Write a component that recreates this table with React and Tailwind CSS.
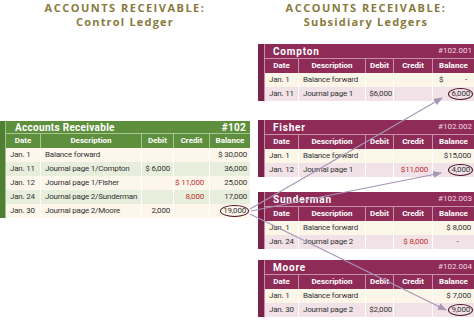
const font = { fontFamily: 'Roboto, "Liberation Sans", sans-serif' }

const leftRows = [
  { date: 'Jan. 1', desc: 'Balance forward', debit: '', credit: '', bal: '$ 30,000' },
  { date: 'Jan. 11', desc: 'Journal page 1/Compton', debit: '$ 6,000', credit: '', bal: '36,000' },
  { date: 'Jan. 12', desc: 'Journal page 1/Fisher', debit: '', credit: '$ 11,000', bal: '25,000' },
  { date: 'Jan. 24', desc: 'Journal page 2/Sunderman', debit: '', credit: '8,000', bal: '17,000' },
  { date: 'Jan. 30', desc: 'Journal page 2/Moore', debit: '2,000', credit: '', bal: '19,000', circle: true },
]

const ledgers = [
  {
    name: 'Compton', num: '#102.001', mt: 'mt-[15px]',
    rows: [
      { date: 'Jan. 1', desc: 'Balance forward', debit: '', credit: '', bal: 'dash' },
      { date: 'Jan. 11', desc: 'Journal page 1', debit: '$6,000', credit: '', bal: '6,000', circle: true },
    ],
  },
  {
    name: 'Fisher', num: '#102.002', mt: 'mt-[19px]',
    rows: [
      { date: 'Jan. 1', desc: 'Balance forward', debit: '', credit: '', bal: '$15,000' },
      { date: 'Jan. 12', desc: 'Journal page 1', debit: '', credit: '$11,000', bal: '4,000', circle: true },
    ],
  },
  {
    name: 'Sunderman', num: '#102.003', mt: 'mt-[15px]',
    rows: [
      { date: 'Jan. 1', desc: 'Balance forward', debit: '', credit: '', bal: '$ 8,000' },
      { date: 'Jan. 24', desc: 'Journal page 2', debit: '', credit: '$ 8,000', bal: '-', center: true },
    ],
  },
  {
    name: 'Moore', num: '#102.004', mt: 'mt-[11px]',
    rows: [
      { date: 'Jan. 1', desc: 'Balance forward', debit: '', credit: '', bal: '$ 7,000' },
      { date: 'Jan. 30', desc: 'Journal page 2', debit: '$2,000', credit: '', bal: '9,000', circle: true },
    ],
  },
]

function Circled({ children }) {
  return (
    <span className="inline-block border-[1.5px] border-[#4a1026] rounded-[50%] px-[2px] leading-[10px] -mr-[2px]">
      {children}
    </span>
  )
}

function Heading({ sub }) {
  return (
    <div className="text-center text-[#887a3c] font-bold leading-[14px] pt-[1px] whitespace-nowrap" style={{ fontFamily: '"Open Sans", "Liberation Sans", sans-serif' }}>
      <div className="text-[11px] tracking-[1.5px]">ACCOUNTS RECEIVABLE:</div>
      <div className="text-[11px] tracking-[1.2px]">{sub}</div>
    </div>
  )
}

const heads = ['Date', 'Description', 'Debit', 'Credit', 'Balance']
const cell = 'flex items-center whitespace-nowrap overflow-hidden'

function ControlLedger() {
  const cols = 'grid grid-cols-[34px_101px_32px_36px_41px]'
  return (
    <div className="flex mt-[92px]" style={font}>
      <div className="w-[6px] bg-[#4f7f33] border-r border-[#9fc08a]" />
      <div className="flex-1">
        <div className="h-[13px] bg-[#5d8f3d] flex items-center justify-between pl-[9px] pr-[4px] text-white font-bold text-[10px] tracking-[0.3px] border-b border-[#a8c795]">
          <span>Accounts Receivable</span>
          <span>#102</span>
        </div>
        <div className={`${cols} h-[14px] bg-[#5d8f3d] text-white font-bold text-[8px]`}>
          {heads.map((h, i) => (
            <div key={h} className={`${cell} justify-center ${i ? 'border-l border-[#a8c795]' : ''}`}>{h}</div>
          ))}
        </div>
        {leftRows.map((r, i) => (
          <div key={r.date} className={`${cols} h-[14px] text-[8px] tracking-[-0.2px] text-[#333333] ${i % 2 ? 'bg-[#e8eedc]' : 'bg-[#fcf7ea]'}`}>
            <div className={`${cell} pl-[4px]`}>{r.date}</div>
            <div className={`${cell} pl-[4px] border-l border-white`}>{r.desc}</div>
            <div className={`${cell} justify-end pr-[3px] border-l border-white`}>{r.debit}</div>
            <div className={`${cell} justify-end pr-[5px] border-l border-white text-[#c4302e]`}>{r.credit}</div>
            <div className={`${cell} justify-end pr-[3px] border-l border-white`}>
              {r.circle ? <Circled>{r.bal}</Circled> : r.bal}
            </div>
          </div>
        ))}
      </div>
    </div>
  )
}

function SubLedger({ name, num, rows, mt }) {
  const cols = 'grid grid-cols-[33px_67px_28px_39px_42px]'
  return (
    <div className={`flex ${mt}`} style={font}>
      <div className="w-[7px] bg-[#7c2149] border-r border-[#c88fa8]" />
      <div className="flex-1">
        <div className="h-[15px] bg-[#8f2b57] flex items-center justify-between pl-[8px] pr-[2px] border-b border-[#c88fa8]">
          <span className="text-white font-bold text-[10px] tracking-[0.8px]">{name}</span>
          <span className="text-[#f3d6e2] text-[8px]">{num}</span>
        </div>
        <div className={`${cols} h-[14px] bg-[#8f2b57] text-white font-bold text-[8px]`}>
          {heads.map((h, i) => (
            <div key={h} className={`${cell} justify-center ${i ? 'border-l border-[#c88fa8]' : ''}`}>{h}</div>
          ))}
        </div>
        {rows.map((r, i) => (
          <div key={r.date} className={`${cols} h-[14px] text-[8px] tracking-[-0.2px] text-[#333333] ${i % 2 ? 'bg-[#f0e2e6]' : 'bg-[#fcf6e8]'}`}>
            <div className={`${cell} pl-[4px]`}>{r.date}</div>
            <div className={`${cell} pl-[4px] border-l border-white`}>{r.desc}</div>
            <div className={`${cell} justify-end pr-[1px] border-l border-white`}>{r.debit}</div>
            <div className={`${cell} justify-end pr-[4px] border-l border-white text-[#c4302e]`}>{r.credit}</div>
            {r.bal === 'dash' ? (
              <div className={`${cell} justify-between pl-[6px] pr-[7px] border-l border-white`}>
                <span>$</span>
                <span>-</span>
              </div>
            ) : (
              <div className={`${cell} ${r.center ? 'justify-center pl-[8px]' : 'justify-end pr-[3px]'} border-l border-white`}>
                {r.circle ? <Circled>{r.bal}</Circled> : r.bal}
              </div>
            )}
          </div>
        ))}
      </div>
    </div>
  )
}

function Arrows() {
  const c = '#a696b6'
  const lines = [
    [250, 209, 442, 98],
    [251, 211, 441, 173],
    [250, 214, 446, 310],
  ]
  return (
    <svg className="absolute left-0 top-0 pointer-events-none" width="474" height="323" viewBox="0 0 474 323">
      <defs>
        <marker id="ah" markerWidth="9" markerHeight="7" refX="8" refY="3.5" orient="auto" markerUnits="userSpaceOnUse">
          <path d="M0 0 L9 3.5 L0 7 Z" fill={c} />
        </marker>
      </defs>
      {lines.map(([x1, y1, x2, y2], i) => (
        <line key={i} x1={x1} y1={y1} x2={x2} y2={y2} stroke={c} strokeWidth="1.2" markerEnd="url(#ah)" />
      ))}
    </svg>
  )
}

export default function App() {
  return (
    <div className="relative w-[474px] h-[323px] bg-white overflow-hidden flex">
      <div className="w-[250px]">
        <Heading sub="Control Ledger" />
        <ControlLedger />
      </div>
      <div className="w-[216px] ml-[8px] flex-none">
        <Heading sub="Subsidiary Ledgers" />
        {ledgers.map((l) => (
          <SubLedger key={l.name} {...l} />
        ))}
      </div>
      <Arrows />
    </div>
  )
}
